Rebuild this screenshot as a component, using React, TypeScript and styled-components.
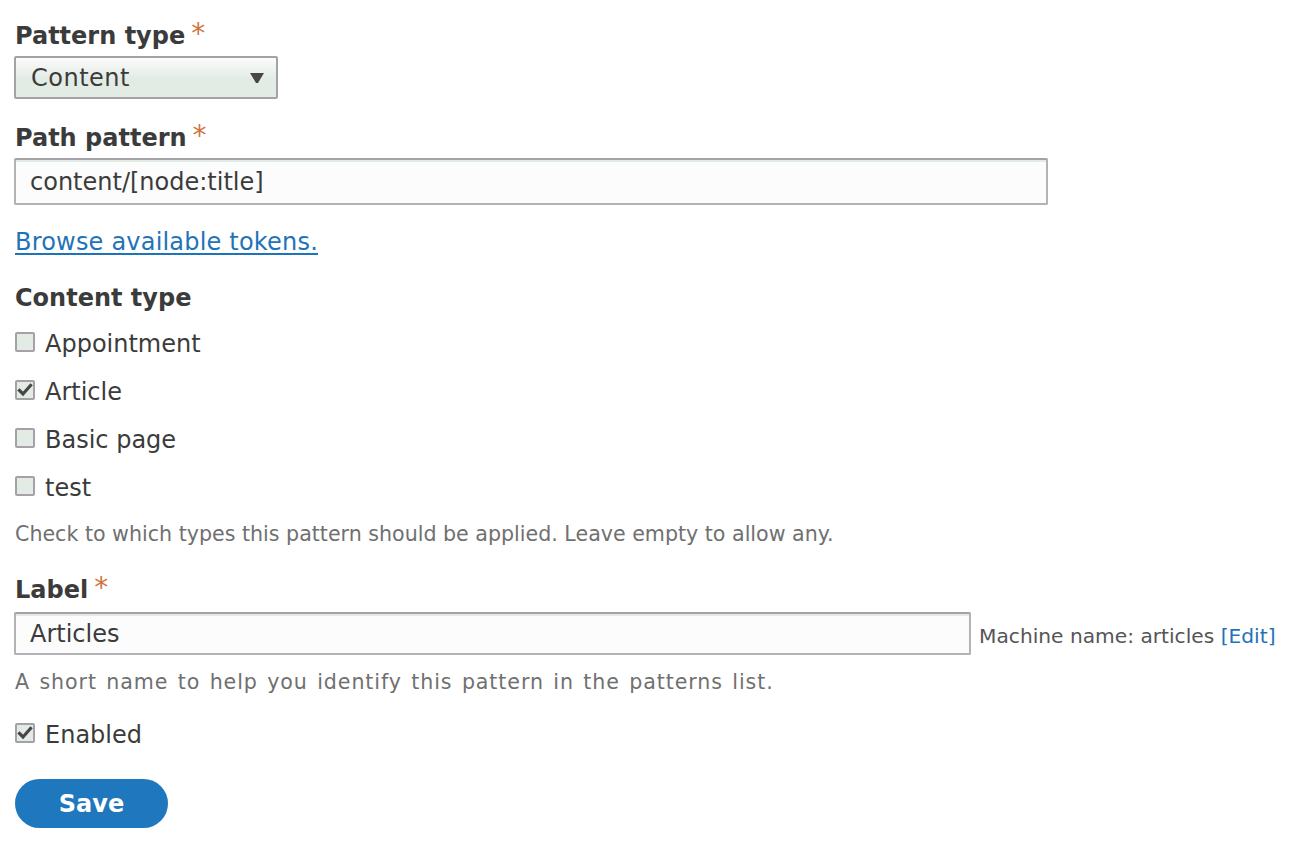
import React from "react";
import styled, { createGlobalStyle } from "styled-components";

const Global = createGlobalStyle`
  html, body { margin: 0; padding: 0; background: #ffffff; }
  body { font-family: "DejaVu Sans", Verdana, sans-serif; color: #3a3a3a; }
  * { box-sizing: border-box; }
`;

const Page = styled.form`
  padding: 22px 0 0 14px;
  width: 1296px;
  height: 848px;
`;

const Item = styled.div<{ $mt?: number }>`
  margin-top: ${(p) => p.$mt ?? 0}px;
`;

const Label = styled.div`
  font-size: 24px;
  line-height: 28px;
  font-weight: bold;
  color: #3b3b3b;
  padding-left: 1px;
`;

const Required = styled.span`
  color: #d0753f;
  font-weight: normal;
  margin-left: 6px;
  font-size: 28px;
  line-height: 0;
  vertical-align: 1px;
`;

const SelectBox = styled.div`
  margin-top: 6px;
  width: 264px;
  height: 43px;
  border: 2px solid #a4a2a6;
  border-radius: 2px;
  background: linear-gradient(#fbfcfb, #e3ebe5 55%, #e3ebe5);
  display: flex;
  align-items: center;
  justify-content: space-between;
  padding: 0 11px 0 15px;
  font-size: 24px;
  letter-spacing: 0.5px;
  color: #3b3b3b;
`;

const TextInput = styled.div<{ $w: number; $h: number }>`
  width: ${(p) => p.$w}px;
  height: ${(p) => p.$h}px;
  border: 2px solid #b4b2b6;
  border-top-color: #a4a2a6;
  border-radius: 2px;
  background: #fbfcfb;
  box-shadow: inset 0 2px 0 #e3ebe5;
  display: flex;
  align-items: center;
  padding-left: 14px;
  font-size: 24px;
  color: #3b3b3b;
`;

const InputRow = styled.div<{ $mt: number }>`
  display: flex;
  align-items: center;
  gap: 8px;
  margin-top: ${(p) => p.$mt}px;
`;

const Link = styled.a`
  display: inline-block;
  font-size: 24px;
  line-height: 28px;
  color: #1f73b9;
  text-decoration: underline;
  text-underline-offset: 3px;
  letter-spacing: 0.2px;
  padding-left: 1px;
`;

const Desc = styled.div<{ $mt: number; $wide?: boolean }>`
  margin-top: ${(p) => p.$mt}px;
  font-size: 20.6px;
  line-height: 24px;
  color: #707070;
  padding-left: 1px;
  letter-spacing: ${(p) => (p.$wide ? "0.9px" : "0")};
  word-spacing: ${(p) => (p.$wide ? "2px" : "0")};
`;

const Machine = styled.span`
  font-size: 20.2px;
  color: #555555;
  margin-top: 4px;
  a {
    color: #1f73b9;
    text-decoration: none;
  }
`;

const CheckList = styled.div`
  margin-top: 18px;
  display: flex;
  flex-direction: column;
  gap: 20px;
`;

const CheckRow = styled.label`
  display: flex;
  align-items: center;
  height: 28px;
  font-size: 24px;
  color: #3b3b3b;
  padding-left: 1px;
`;

const Box = styled.span`
  width: 20px;
  height: 20px;
  margin-top: -4px;
  margin-right: 10px;
  border: 2px solid #a4a2a6;
  border-radius: 2px;
  background: #e3ebe5;
  display: inline-flex;
  align-items: center;
  justify-content: center;
`;

const SaveButton = styled.button`
  margin-top: 30px;
  margin-left: 1px;
  width: 153px;
  height: 49px;
  border: none;
  border-radius: 25px;
  background: #1f77be;
  color: #ffffff;
  font-family: "DejaVu Sans", Verdana, sans-serif;
  font-weight: bold;
  font-size: 24px;
  padding: 0;
`;

const Arrow = () => (
  <svg width="16" height="14" viewBox="0 0 16 14">
    <path d="M1 2 H15 L9 12 H7 Z" fill="#4a4548" />
  </svg>
);

const Tick = () => (
  <svg width="16" height="16" viewBox="0 0 16 16">
    <polyline
      points="2.5,8.5 6,12 13.5,3.5"
      fill="none"
      stroke="#4a4548"
      strokeWidth="3.2"
      strokeLinecap="square"
    />
  </svg>
);

const Check = ({ label, checked }: { label: string; checked?: boolean }) => (
  <CheckRow>
    <Box>{checked && <Tick />}</Box>
    {label}
  </CheckRow>
);

export default function App() {
  return (
    <>
      <Global />
      <Page onSubmit={(e) => e.preventDefault()}>
        <Item>
          <Label>
            Pattern type<Required>*</Required>
          </Label>
          <SelectBox>
            <span>Content</span>
            <Arrow />
          </SelectBox>
        </Item>
        <Item $mt={25}>
          <Label>
            Path pattern<Required>*</Required>
          </Label>
          <InputRow $mt={6}>
            <TextInput $w={1034} $h={47}>content/[node:title]</TextInput>
          </InputRow>
        </Item>
        <Item $mt={23}>
          <Link href="#">Browse available tokens.</Link>
        </Item>
        <Item $mt={28}>
          <Label>Content type</Label>
          <CheckList>
            <Check label="Appointment" />
            <Check label="Article" checked />
            <Check label="Basic page" />
            <Check label="test" />
          </CheckList>
          <Desc $mt={20}>
            Check to which types this pattern should be applied. Leave empty to allow any.
          </Desc>
        </Item>
        <Item $mt={30}>
          <Label>
            Label<Required>*</Required>
          </Label>
          <InputRow $mt={8}>
            <TextInput $w={957} $h={43}>Articles</TextInput>
            <Machine>
              Machine name: articles <a href="#">[Edit]</a>
            </Machine>
          </InputRow>
          <Desc $mt={15} $wide>
            A short name to help you identify this pattern in the patterns list.
          </Desc>
        </Item>
        <Item $mt={27}>
          <Check label="Enabled" checked />
        </Item>
        <SaveButton type="submit">Save</SaveButton>
      </Page>
    </>
  );
}
